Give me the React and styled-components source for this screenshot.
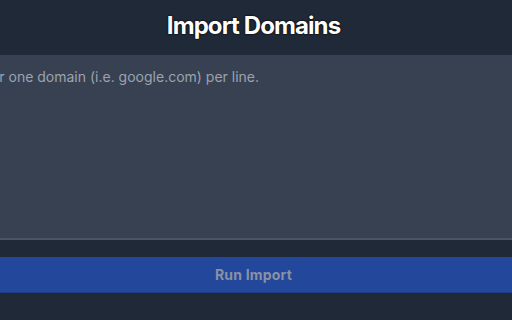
import React from "react";
import styled, { createGlobalStyle } from "styled-components";

const Global = createGlobalStyle`
  html, body {
    margin: 0;
    padding: 0;
    background: #1f2937;
    overflow: hidden;
  }
  * {
    box-sizing: border-box;
  }
`;

const Page = styled.div`
  width: 100%;
  height: 320px;
  overflow: hidden;
  background: #1f2937;
  display: flex;
  flex-direction: column;
  font-family: Inter, "Liberation Sans", sans-serif;
`;

const Header = styled.header`
  height: 55px;
  display: flex;
  align-items: center;
  justify-content: center;
  padding: 0 5px 4px 0;
`;

const Title = styled.h1`
  margin: 0;
  font-size: 24px;
  font-weight: 700;
  letter-spacing: -0.9px;
  color: #ffffff;
  text-shadow: 0 0 2px #000, 0 0 1px #000;
`;

const DomainInput = styled.textarea`
  display: block;
  flex: none;
  height: 185px;
  margin: 0 -40px 0 -42px;
  padding: 12px 12px;
  border: none;
  border-bottom: 2px solid #4b5563;
  background: #374151;
  color: #e5e7eb;
  font-family: Inter, "Liberation Sans", sans-serif;
  font-size: 14px;
  line-height: 20px;
  resize: none;
  outline: none;
  &::placeholder {
    color: #9ca3af;
  }
`;

const Actions = styled.div`
  padding-top: 17px;
`;

const RunButton = styled.button`
  display: block;
  width: 100%;
  height: 36px;
  padding: 0 5px 0 0;
  border: none;
  border-bottom: 1px solid #1e3a8a;
  background: #23479a;
  color: #8991a4;
  font-family: Inter, "Liberation Sans", sans-serif;
  font-size: 14px;
  font-weight: 700;
  letter-spacing: 0.2px;
  cursor: not-allowed;
`;

function App() {
  return (
    <Page>
      <Global />
      <Header>
        <Title>Import Domains</Title>
      </Header>
      <DomainInput placeholder="Enter one domain (i.e. google.com) per line." />
      <Actions>
        <RunButton disabled>Run Import</RunButton>
      </Actions>
    </Page>
  );
}

export default App;
